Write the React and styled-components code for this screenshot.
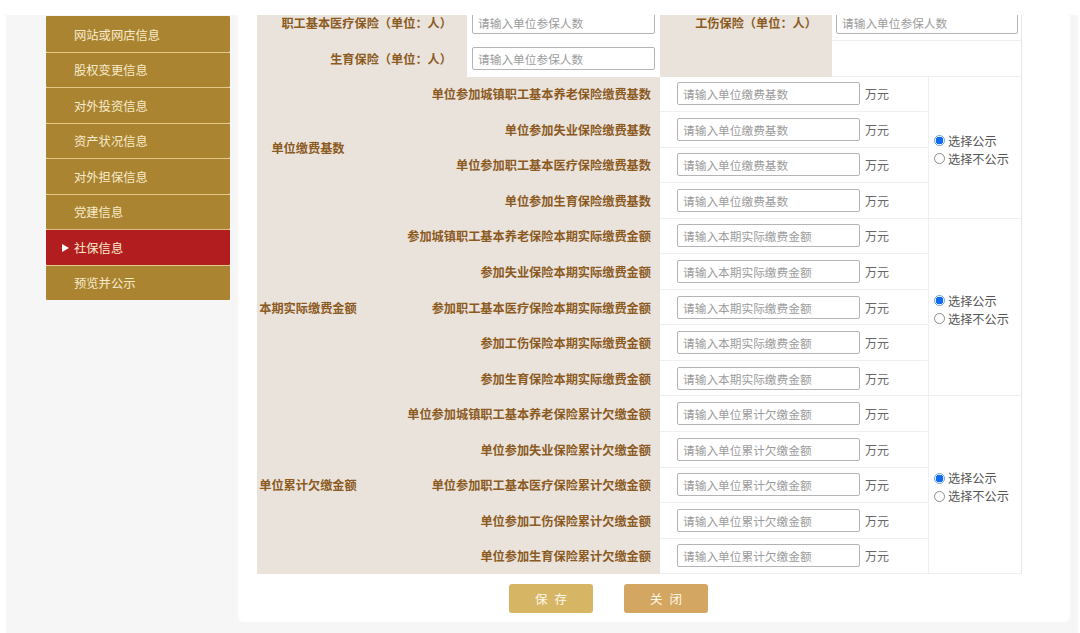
import React from 'react';
import styled, { createGlobalStyle } from 'styled-components';

const GlobalStyle = createGlobalStyle`
  html, body { margin: 0; padding: 0; background: #ffffff; }
  body { font-family: "Noto Sans CJK SC", "Noto Sans", sans-serif; }
  * { box-sizing: border-box; }
`;

const Frame = styled.div`
  margin: 15px 2px 0 6px;
  height: 618px;
  background: #f6f6f6;
  display: flex;
  align-items: flex-start;
`;

const Sidebar = styled.nav`
  width: 232px;
  flex: none;
  padding: 1px 8px 0 40px;
`;

const MenuItem = styled.div`
  height: 35.5px;
  display: flex;
  align-items: center;
  padding-left: 28px;
  padding-top: 1px;
  background: ${p => (p.$active ? '#b21e1f' : '#aa8431')};
  color: #f7ebcb;
  font-size: 12.3px;
  border-top: 1px solid ${p => (p.$first ? 'transparent' : 'rgba(238, 212, 150, 0.85)')};
  border-radius: 1px;
`;

const Marker = styled.span`
  width: 0;
  height: 0;
  border-left: 7px solid #ffffff;
  border-top: 4px solid transparent;
  border-bottom: 4px solid transparent;
  margin-left: -12px;
  margin-right: 5px;
`;

const Panel = styled.main`
  width: 832px;
  height: 607px;
  flex: none;
  background: #ffffff;
  border-radius: 0 0 6px 6px;
  overflow: hidden;
  padding: 0 48px 0 19px;
  display: flex;
  flex-direction: column;
`;

const Table = styled.table`
  width: 765px;
  flex: none;
  table-layout: fixed;
  border-collapse: separate;
  border-spacing: 0;
  margin-top: ${p => p.$offset || 0};
`;

const Row = styled.tr`
  height: ${p => p.$h || '35.55px'};
`;

const LabelCell = styled.td`
  padding: 0 ${p => p.$pr || '0px'} 0 0;
  vertical-align: middle;
  background: #e9e3dc;
  text-align: ${p => p.$align || 'right'};
  color: #8c5a1e;
  font-weight: 700;
  font-size: 12.2px;
  line-height: 16px;
  white-space: nowrap;
`;

const InputCell = styled.td`
  padding: 0 0 0 ${p => p.$pl || '4px'};
  vertical-align: middle;
  background: #ffffff;
  border-bottom: 1px solid ${p => (p.$noLine ? 'transparent' : '#efefef')};
  border-right: 1px solid ${p => (p.$edge ? '#e6e6e6' : 'transparent')};
`;

const Field = styled.div`
  display: flex;
  align-items: center;
`;

const TextInput = styled.input`
  width: ${p => p.$w || '183px'};
  height: 23px;
  border: 1px solid #b4b4b4;
  border-radius: 2px;
  padding: 0 5px;
  font-family: "Noto Sans CJK SC", sans-serif;
  font-size: 11.7px;
  color: #333;
  background: #fff;
  &::placeholder { color: #9c9c9c; }
`;

const Unit = styled.span`
  margin-left: 5px;
  font-size: 12px;
  color: #666666;
`;

const RadioCell = styled.td`
  padding: 5px 0 0 4px;
  vertical-align: middle;
  background: #ffffff;
  border-left: 1px solid #efefef;
  border-right: 1px solid #e6e6e6;
  border-bottom: 1px solid #efefef;
`;

const RadioLabel = styled.label`
  display: flex;
  align-items: center;
  height: 18px;
  font-size: 12.2px;
  color: #555555;
`;

const Radio = styled.input.attrs({ type: 'radio' })`
  appearance: none;
  width: 11px;
  height: 11px;
  margin: 0 3px 0 1px;
  border-radius: 50%;
  border: 1px solid #8a8a8a;
  background: #ffffff;
  &:checked {
    border-color: #6d9be0;
    background: radial-gradient(circle, #0f6cf0 0 58%, #ffffff 64%);
  }
`;

const ButtonBar = styled.div`
  display: flex;
  gap: 31px;
  padding-left: 252px;
  margin-top: 10px;
`;

const Button = styled.button`
  width: 84px;
  height: 29px;
  border: none;
  border-radius: 3px;
  background: ${p => (p.$tone === 'close' ? '#d3a661' : '#d6b565')};
  color: #fff8ea;
  font-family: "Noto Sans CJK SC", sans-serif;
  font-size: 12.5px;
  letter-spacing: 7px;
  text-indent: 7px;
  padding: 0;
`;

const menu = ['网站或网店信息', '股权变更信息', '对外投资信息', '资产状况信息', '对外担保信息', '党建信息', '社保信息', '预览并公示'];

const groups = [
  {
    title: '单位缴费基数',
    placeholder: '请输入单位缴费基数',
    items: ['单位参加城镇职工基本养老保险缴费基数', '单位参加失业保险缴费基数', '单位参加职工基本医疗保险缴费基数', '单位参加生育保险缴费基数'],
  },
  {
    title: '本期实际缴费金额',
    placeholder: '请输入本期实际缴费金额',
    items: ['参加城镇职工基本养老保险本期实际缴费金额', '参加失业保险本期实际缴费金额', '参加职工基本医疗保险本期实际缴费金额', '参加工伤保险本期实际缴费金额', '参加生育保险本期实际缴费金额'],
  },
  {
    title: '单位累计欠缴金额',
    placeholder: '请输入单位累计欠缴金额',
    items: ['单位参加城镇职工基本养老保险累计欠缴金额', '单位参加失业保险累计欠缴金额', '单位参加职工基本医疗保险累计欠缴金额', '单位参加工伤保险累计欠缴金额', '单位参加生育保险累计欠缴金额'],
  },
];

export default function App() {
  return (
    <>
      <GlobalStyle />
      <Frame>
        <Sidebar>
          {menu.map((m, i) => (
            <MenuItem key={m} $first={i === 0} $active={m === '社保信息'}>
              {m === '社保信息' && <Marker />}
              {m}
            </MenuItem>
          ))}
        </Sidebar>
        <Panel>
          <Table $offset="-10.5px">
            <colgroup>
              <col style={{ width: 210 }} />
              <col style={{ width: 193 }} />
              <col style={{ width: 172 }} />
              <col style={{ width: 190 }} />
            </colgroup>
            <tbody>
              <Row $h="36px">
                <LabelCell $pr="15px">职工基本医疗保险（单位：人）</LabelCell>
                <InputCell $pl="5px" $noLine><Field><TextInput placeholder="请输入单位参保人数" /></Field></InputCell>
                <LabelCell $pr="15px">工伤保险（单位：人）</LabelCell>
                <InputCell $pl="4px" $edge><Field><TextInput $w="182px" placeholder="请输入单位参保人数" /></Field></InputCell>
              </Row>
              <Row $h="36px">
                <LabelCell $pr="15px">生育保险（单位：人）</LabelCell>
                <InputCell $pl="5px" $noLine><Field><TextInput placeholder="请输入单位参保人数" /></Field></InputCell>
                <LabelCell />
                <InputCell $edge />
              </Row>
            </tbody>
          </Table>
          <Table>
            <colgroup>
              <col style={{ width: 102 }} />
              <col style={{ width: 301 }} />
              <col style={{ width: 268 }} />
              <col style={{ width: 94 }} />
            </colgroup>
            <tbody>
              {groups.map((g, gi) =>
                g.items.map((item, i) => (
                  <Row key={item}>
                    {i === 0 && (
                      <LabelCell rowSpan={g.items.length} $align="center">{g.title}</LabelCell>
                    )}
                    <LabelCell $pr="9px">{item}</LabelCell>
                    <InputCell $pl="17px">
                      <Field>
                        <TextInput placeholder={g.placeholder} />
                        <Unit>万元</Unit>
                      </Field>
                    </InputCell>
                    {i === 0 && (
                      <RadioCell rowSpan={g.items.length}>
                        <RadioLabel><Radio name={`pub${gi}`} defaultChecked />选择公示</RadioLabel>
                        <RadioLabel><Radio name={`pub${gi}`} />选择不公示</RadioLabel>
                      </RadioCell>
                    )}
                  </Row>
                ))
              )}
            </tbody>
          </Table>
          <ButtonBar>
            <Button>保存</Button>
            <Button $tone="close">关闭</Button>
          </ButtonBar>
        </Panel>
      </Frame>
    </>
  );
}
